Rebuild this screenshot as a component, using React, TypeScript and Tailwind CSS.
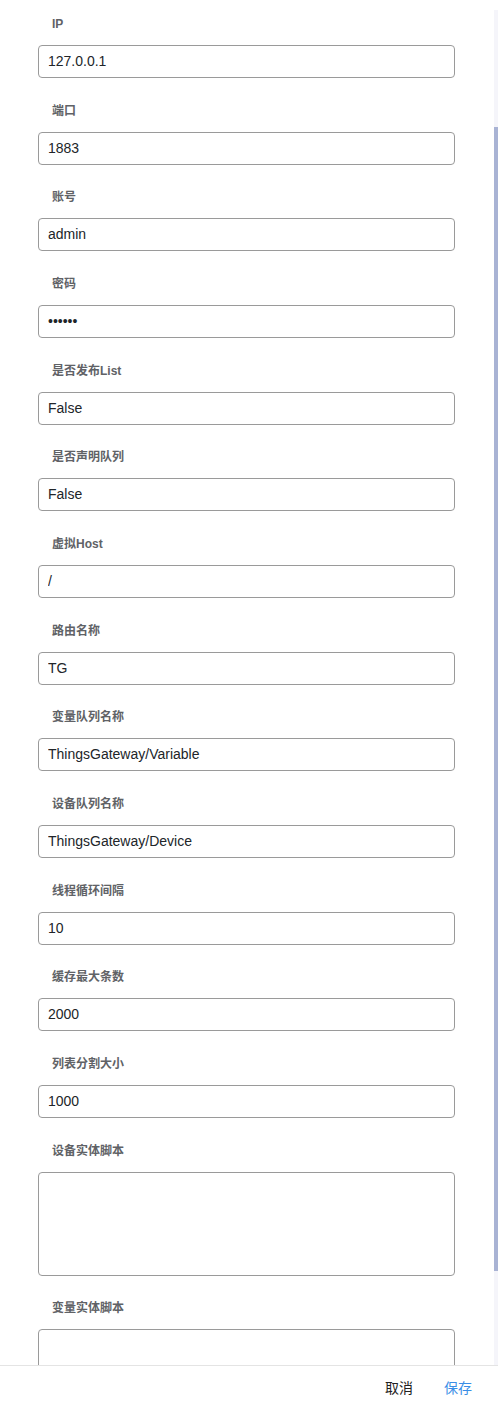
import React from "react";

type Field = { label: string; value: string; type?: "text" | "password" | "textarea" };

const fields: Field[] = [
  { label: "IP", value: "127.0.0.1" },
  { label: "端口", value: "1883" },
  { label: "账号", value: "admin" },
  { label: "密码", value: "123456", type: "password" },
  { label: "是否发布List", value: "False" },
  { label: "是否声明队列", value: "False" },
  { label: "虚拟Host", value: "/" },
  { label: "路由名称", value: "TG" },
  { label: "变量队列名称", value: "ThingsGateway/Variable" },
  { label: "设备队列名称", value: "ThingsGateway/Device" },
  { label: "线程循环间隔", value: "10" },
  { label: "缓存最大条数", value: "2000" },
  { label: "列表分割大小", value: "1000" },
  { label: "设备实体脚本", value: "", type: "textarea" },
  { label: "变量实体脚本", value: "", type: "textarea" },
];

const font = "font-['Liberation_Sans','Noto_Sans_CJK_SC',sans-serif]";

function FormItem({ field }: { field: Field }) {
  const base =
    "block w-full rounded-[4px] border border-[#9a9a9a] bg-white px-[9px] text-[14px] text-[#212529] outline-none";
  return (
    <div className="mb-[23.67px]">
      <div className="h-[18px] pl-[14px] text-[12px] font-bold leading-[18px] text-[#606266]">{field.label}</div>
      <div className="mt-[12px]">
        {field.type === "textarea" ? (
          <textarea readOnly defaultValue={field.value} className={`${base} h-[104px] resize-none`} />
        ) : (
          <input
            readOnly
            type={field.type === "password" ? "password" : "text"}
            defaultValue={field.value}
            className={`${base} h-[33px] leading-[33px]`}
          />
        )}
      </div>
    </div>
  );
}

export default function App() {
  return (
    <div className={`relative h-[1401px] w-[498px] overflow-hidden bg-white ${font}`}>
      <div className="h-[1365px] overflow-hidden pl-[38px] pr-[43px] pt-[15px]">
        {fields.map((f) => (
          <FormItem key={f.label} field={f} />
        ))}
      </div>

      {/* scrollbar */}
      <div className="absolute right-0 top-[10px] h-[1355px] w-[4px] bg-[#f5f5fa]">
        <div className="mt-[117px] h-[1144px] w-full bg-[#a9b3d4]" />
      </div>

      <div className="absolute bottom-0 left-0 flex h-[36px] w-full items-start justify-end gap-[31px] border-t border-[#e4e4e4] bg-white pr-[26px] pt-[12px] text-[14px] leading-[20px]">
        <button className="text-[#222]">取消</button>
        <button className="text-[#3a8ee6]">保存</button>
      </div>
    </div>
  );
}
